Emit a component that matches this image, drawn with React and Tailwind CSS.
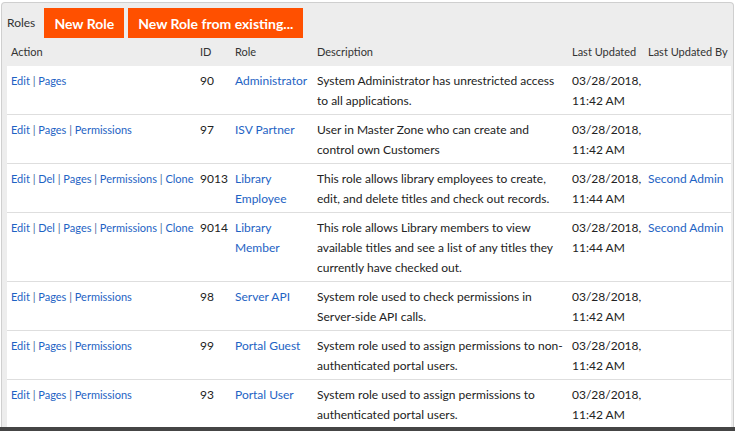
import React from "react";

const rows = [
  { actions: ["Edit", "Pages"], id: "90", role: "Administrator", desc: "System Administrator has unrestricted access to all applications.", time: "11:42 AM", by: "" },
  { actions: ["Edit", "Pages", "Permissions"], id: "97", role: "ISV Partner", desc: "User in Master Zone who can create and control own Customers", time: "11:42 AM", by: "" },
  { actions: ["Edit", "Del", "Pages", "Permissions", "Clone"], id: "9013", role: "Library Employee", desc: "This role allows library employees to create, edit, and delete titles and check out records.", time: "11:44 AM", by: "Second Admin" },
  { actions: ["Edit", "Del", "Pages", "Permissions", "Clone"], id: "9014", role: "Library Member", desc: "This role allows Library members to view available titles and see a list of any titles they currently have checked out.", time: "11:44 AM", by: "Second Admin" },
  { actions: ["Edit", "Pages", "Permissions"], id: "98", role: "Server API", desc: "System role used to check permissions in Server-side API calls.", time: "11:42 AM", by: "" },
  { actions: ["Edit", "Pages", "Permissions"], id: "99", role: "Portal Guest", desc: "System role used to assign permissions to non-authenticated portal users.", time: "11:42 AM", by: "" },
  { actions: ["Edit", "Pages", "Permissions"], id: "93", role: "Portal User", desc: "System role used to assign permissions to authenticated portal users.", time: "11:42 AM", by: "" },
];

export default function App() {
  return (
    <div
      className="w-[735px] h-[431px] overflow-hidden bg-white flex flex-col text-[12px] text-[#222]"
      style={{ fontFamily: "Lato, 'Open Sans', sans-serif" }}
    >
      <div className="flex-1 overflow-hidden pt-[2px] pl-[1px] pr-[1px]">
        <div className="h-full border border-b-0 border-[#cfcfcf] rounded-t-[4px] bg-[#ededed] pl-[5px] pr-[2px]">
          <div className="flex items-center h-[35px] pt-[5px]">
            <span className="text-[12px] text-[#333] mr-[9px]">Roles</span>
            <button className="h-[30px] w-[80px] bg-[#ff5000] text-white font-bold text-[14px] mr-[4px]">New Role</button>
            <button className="h-[30px] w-[175px] bg-[#ff5000] text-white font-bold text-[14px]">New Role from existing...</button>
          </div>
          <table className="table-fixed w-[724px] border-collapse">
            <colgroup>
              <col className="w-[189px]" />
              <col className="w-[35px]" />
              <col className="w-[82px]" />
              <col className="w-[255px]" />
              <col className="w-[76px]" />
              <col className="w-[87px]" />
            </colgroup>
            <thead>
              <tr className="h-[28px] text-[#333] text-[11px]">
                <th className="text-left font-normal px-1">Action</th>
                <th className="text-left font-normal px-1">ID</th>
                <th className="text-left font-normal px-1">Role</th>
                <th className="text-left font-normal px-1">Description</th>
                <th className="text-left font-normal pl-1 pr-0 whitespace-nowrap">Last Updated</th>
                <th className="text-left font-normal px-1 whitespace-nowrap">Last Updated By</th>
              </tr>
            </thead>
            <tbody>
              {rows.map((r) => (
                <tr key={r.id} className="bg-white border-b border-[#dedede] align-top leading-[20px]">
                  <td className="pt-[5px] pb-[3px] px-1 whitespace-nowrap text-[11px]">
                    {r.actions.map((a, i) => (
                      <React.Fragment key={a}>
                        {i > 0 && <span className="text-[#4b6a9b]"> | </span>}
                        <a className="text-[#1e63c4]">{a}</a>
                      </React.Fragment>
                    ))}
                  </td>
                  <td className="pt-[5px] pb-[3px] px-1">{r.id}</td>
                  <td className="pt-[5px] pb-[3px] pl-1 pr-0 text-[#1e63c4]">{r.role}</td>
                  <td className="pt-[5px] pb-[3px] px-1">{r.desc}</td>
                  <td className="pt-[5px] pb-[3px] pl-1 pr-0">
                    <div>03/28/2018,</div>
                    <div>{r.time}</div>
                  </td>
                  <td className="pt-[5px] pb-[3px] px-1 text-[#1e63c4] whitespace-nowrap">{r.by}</td>
                </tr>
              ))}
            </tbody>
          </table>
        </div>
      </div>
      <div className="h-[4px] bg-[#454545]" />
    </div>
  );
}
